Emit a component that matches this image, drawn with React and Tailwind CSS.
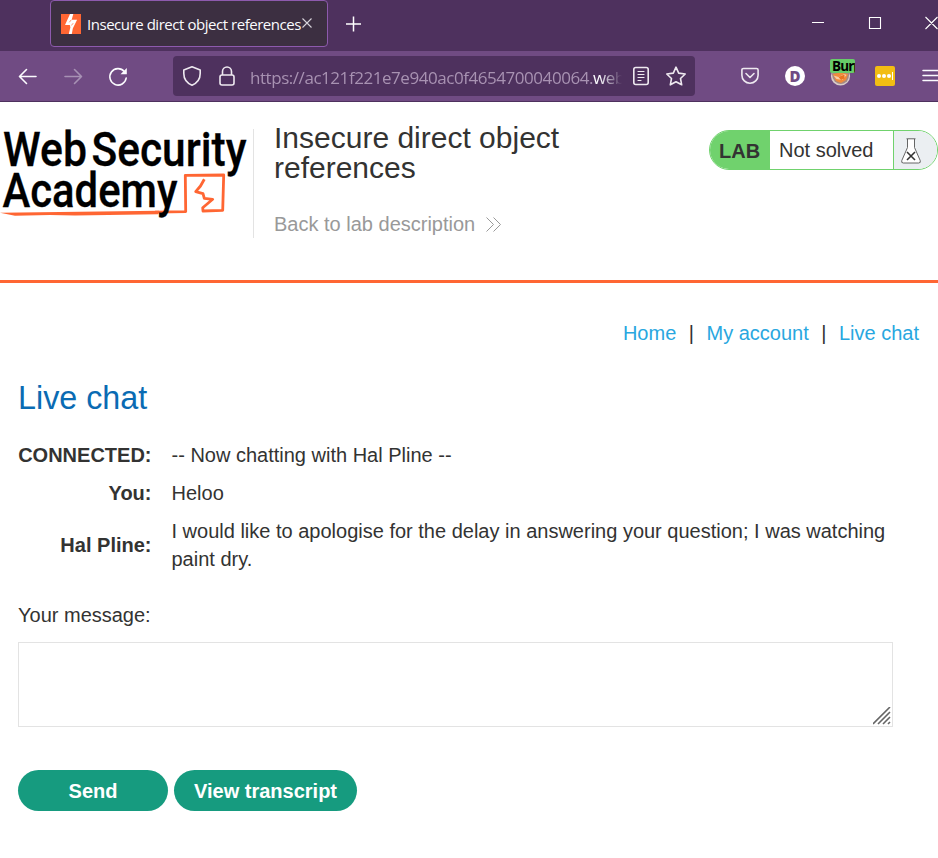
import React from "react";

function Bolt() {
  return (
    <svg className="h-5 w-5 shrink-0" viewBox="0 0 20 20">
      <rect width="20" height="20" fill="#ff6633" />
      <path d="M9 0h3.300l-1.600 5.800h5.400l-4.300 8.700L10.800 20H7.800l1.600-6.700-.6-2.300H4z" fill="#fff" />
      <path d="M8.300 8.300 10.300 5.800M10.300 11.500l1.900-2.300" stroke="#ff6633" strokeWidth=".7" />
    </svg>
  );
}

function TabStrip() {
  return (
    <div className="flex h-[51px] bg-[#4e315e] pl-[50px]">
      <div className="flex h-[47px] w-[278px] shrink-0 items-center rounded-[4px] border border-[#8d5aad] bg-[#3c2f41] pl-[10px]">
        <Bolt />
        <span className="ml-[6px] w-[215px] whitespace-nowrap font-['Open_Sans','Noto_Sans',sans-serif] text-[15px] leading-5 tracking-[-0.46px] text-[#fbfbfe]">Insecure direct object references</span>
        <svg className="-mt-[2px] h-[10px] w-[10px]" viewBox="0 0 10 10" stroke="#d8d4da" strokeWidth="1.1"><path d="M.5.5l9 9M9.500.5l-9 9" /></svg>
      </div>
      <svg className="ml-[17px] mt-4 h-4 w-4" viewBox="0 0 16 16" stroke="#fff" strokeWidth="1.5"><path d="M1 8h15M8.500 .5v15" /></svg>
      <svg className="ml-auto mt-4 h-[14px] w-[126px]" viewBox="0 0 126 14" fill="none" stroke="#fff" strokeWidth="1.1">
        <path d="M0 6.500h12M57.500 1.500h11v11h-11zM113.500 1l12 12M125.500 1l-12 12" />
      </svg>
    </div>
  );
}

function Toolbar() {
  return (
    <div className="flex h-[51px] items-center border-b border-[#4e315e] bg-[#704b83] font-['Open_Sans','Noto_Sans',sans-serif]">
      <svg className="ml-[18px] h-5 w-[110px] overflow-visible" viewBox="0 0 110 20" fill="none" stroke="#fbfbfe" strokeWidth="1.6" strokeLinecap="round" strokeLinejoin="round">
        <path d="M18 10.500H2M8.500 3.500l-7 7 7 7" />
        <path d="M47 10.500h16M56.500 3.500l7 7-7 7" opacity=".4" />
        <path d="M106.300 5.500A8.200 8.200 0 1 0 108.200 12" />
        <path d="M108.800 2v6.300h-6.300z" fill="#fbfbfe" stroke="none" />
      </svg>
      <div className="ml-[45px] flex h-10 w-[522px] items-center rounded-[4px] bg-[#4e315e]">
        <svg className="ml-[10px] h-5 w-[52px]" viewBox="0 0 52 20" fill="none" stroke="#eee9f0" strokeWidth="1.6" strokeLinejoin="round">
          <path d="M9 .8 17.200 4v3.500c0 5.500-2.700 9.400-8.200 11.700C3.500 16.900.8 13 .8 7.500V4z" />
          <rect x="37" y="9" width="14" height="10" rx="2" />
          <path d="M39.500 9V5.500a4.500 4.500 0 0 1 9 0V9" />
        </svg>
        <div className="ml-[15px] mt-[3px] w-[372px] overflow-hidden whitespace-nowrap text-[17px] leading-6 tracking-[-0.45px] text-[#a892b2] [mask-image:linear-gradient(to_right,black_94%,transparent)]">
          https://ac121f221e7e940ac0f4654700040064.<span className="text-[#fbfbfe]">web</span>
        </div>
        <svg className="ml-[11px] h-5 w-[54px]" viewBox="0 0 54 20" fill="none" stroke="#eee9f0" strokeWidth="1.6" strokeLinecap="round" strokeLinejoin="round">
          <rect x=".8" y="1.500" width="14.400" height="17" rx="2" />
          <path d="M5 5.500h6M5 8.500h6M5 11.500h6M5 14.500h3" strokeWidth="1.200" />
          <path d="m43 1.200 2.700 5.900 6.500.9-4.700 4.500 1.200 6.300-5.700-3-5.700 3 1.200-6.300L33.800 8l6.500-.9z" />
        </svg>
      </div>
      <svg className="ml-[46px] h-[18px] w-[18px] shrink-0" viewBox="0 0 18 18" fill="none" stroke="#eee9f0" strokeWidth="1.6" strokeLinecap="round" strokeLinejoin="round">
        <path d="M2.500 1.500h13c1 0 1.600.6 1.600 1.600v5.100a8.100 8.100 0 0 1-16.200 0V3.100c0-1 .6-1.600 1.600-1.600zM5 6.500l4 4 4-4" />
      </svg>
      <div className="ml-[26px] flex h-5 w-5 shrink-0 items-center justify-center rounded-full bg-white text-[15px] font-extrabold leading-5 text-[#704b83]">D</div>
      <div className="relative ml-[25px] h-[30px] w-[25px] shrink-0">
        <svg className="absolute bottom-[5px] left-0 h-5 w-[21px]" viewBox="0 0 21 20">
          <circle cx="10.500" cy="10" r="9.600" fill="#d9cdca" />
          <path d="M2.300 6h16.500q1 6-2 9.500-6 5-12 0-3.500-4-2.500-9.500z" fill="#a58a83" />
          <path d="m3 8 5-1h5l5 1-2 6-5 3-5-2z" fill="#f08b3b" />
          <path d="m3.500 9.500 5 1.500 6-3 2 1-4 5-6-1z" fill="#f6cfa8" />
          <path d="m8.500 11 6-2.500v4l-3.500 1.500z" fill="#e87520" />
        </svg>
        <div className="absolute left-0 top-[-2px] h-[14px] w-[25px] overflow-hidden rounded-[2px] bg-[#68cc69] pl-[2px] text-[13.500px] font-bold leading-[14px] tracking-[-0.9px] text-black">Burp</div>
      </div>
      <div className="ml-5 flex h-5 w-5 shrink-0 items-center gap-px rounded-[2px] bg-[#f2bd12] pl-[2px]">
        <i className="h-1 w-1 rounded-full bg-white" /><i className="h-1 w-1 rounded-full bg-white" /><i className="h-1 w-1 rounded-full bg-white" /><i className="h-2 w-px bg-white" />
      </div>
      <svg className="ml-[27px] h-[14px] w-4 shrink-0" viewBox="0 0 16 14" stroke="#fbfbfe" strokeWidth="1.5" strokeLinecap="round"><path d="M1 1.500h18M1 6.500h18M1 11.500h18" /></svg>
    </div>
  );
}

function AcademyLogo() {
  return (
    <svg className="h-[109px] w-[253px] shrink-0" viewBox="0 129 253 109">
      <path d="M155 212.200 185.700 211.600 185.300 175.300 223.700 175 222.700 210.300 203 211 202.700 207.700 212.700 199.300 204.300 198.300 203 193.700 195.700 191.700 200.500 186 204.300 179.300" fill="none" stroke="#ff6633" strokeWidth="2.800" strokeLinejoin="round" />
      <path d="M0 212.800 60 212 159 210.800 158 214.200 75 215.600 50 215 15 215.800z" fill="#ff6633" />
      <g fill="#000" stroke="#000" strokeWidth=".3" fontFamily="Roboto, sans-serif" fontSize="47.500" fontWeight="500">
        <text x="3" y="166" textLength="84" lengthAdjust="spacingAndGlyphs">Web</text>
        <text x="91.500" y="166" textLength="155" lengthAdjust="spacingAndGlyphs">Security</text>
        <text x="2.500" y="207" textLength="175" lengthAdjust="spacingAndGlyphs">Academy</text>
      </g>
    </svg>
  );
}

function Header() {
  return (
    <header className="flex h-[181px] border-b-[3px] border-[#ff6633] pt-[27px]">
      <AcademyLogo />
      <div className="h-[109px] w-px bg-[#e3e3e3]" />
      <div className="w-[310px] shrink-0 pl-5">
        <h2 className="mt-[-6px] text-[30px] leading-[30px]">Insecure direct object references</h2>
        <a className="mt-[27px] flex items-center text-xl leading-7 text-[#999]">
          Back to lab description
          <svg className="ml-[11px] h-[15px] w-[15px]" viewBox="0 0 15 15" fill="none" stroke="#999" strokeWidth="1"><path d="m.5.5 7 7-7 7M7.500.5l7 7-7 7" /></svg>
        </a>
      </div>
      <div className="ml-auto mt-px flex h-10 w-[229px] shrink-0 overflow-hidden rounded-full border border-[#70d26d] text-xl leading-[38px]">
        <div className="w-[60px] bg-[#70d26d] pl-[9px] pt-px font-bold">LAB</div>
        <div className="w-[124px] border-r border-[#70d26d] pl-[9px]">Not solved</div>
        <div className="flex-1 bg-[#ebeff2] pl-[7px] pt-[7px]">
          <svg className="h-[26px] w-5" viewBox="0 0 20 26" fill="#fff" stroke="#555" strokeWidth=".9"><path d="M6.500 1v8.500L.8 22.500q-.8 2.500 1.500 2.500h15.400q2.300 0 1.500-2.500L13.500 9.500V1" /><path d="M5.500 .8h9" /><path d="m6 14 8 8m0-8-8 8" stroke="#333" strokeWidth="1.600" /></svg>
        </div>
      </div>
    </header>
  );
}

export default function App() {
  return (
    <div className="h-[858px] w-[938px] overflow-hidden bg-white font-['Liberation_Sans',Arial,sans-serif] text-[#333332]">
      <TabStrip />
      <Toolbar />
      <Header />
      <nav className="mt-9 flex justify-end gap-[12.500px] pr-[19px] text-xl leading-7">
        <a className="text-[#29a7df]">Home</a><span>|</span><a className="text-[#29a7df]">My account</a><span>|</span><a className="text-[#29a7df]">Live chat</a>
      </nav>
      <main className="pl-[18px] text-xl">
        <h1 className="mt-[31px] text-[32.300px] leading-10 text-[#0a6bb3]">Live chat</h1>
        <div className="mt-[23px] grid w-[885px] grid-cols-[133.500px_1fr] items-center gap-x-[20px] gap-y-[10px] leading-7">
          <b className="text-right">CONNECTED:</b><span>-- Now chatting with Hal Pline --</span>
          <b className="text-right">You:</b><span>Heloo</span>
          <b className="text-right">Hal Pline:</b><span>I would like to apologise for the delay in answering your question; I was watching paint dry.</span>
        </div>
        <label className="mt-7 block leading-7">Your message:</label>
        <div className="mt-[13px] flex h-[85px] w-[875px] items-end justify-end border border-[#e3e3e3] p-px">
          <svg className="h-[18px] w-[18px]" viewBox="0 0 18 18" stroke="#666" strokeWidth="1.600"><path d="M0 17 17 0M5 17 17 5M10 17l7-7M15 17l2-2" /></svg>
        </div>
        <div className="mt-[43px] flex gap-[6px] text-center font-bold text-white">
          <button className="h-[41px] w-[150px] rounded-full bg-[#169b7f] pt-px leading-10">Send</button>
          <button className="h-[41px] w-[183px] rounded-full bg-[#169b7f] pt-px leading-10">View transcript</button>
        </div>
      </main>
    </div>
  );
}
